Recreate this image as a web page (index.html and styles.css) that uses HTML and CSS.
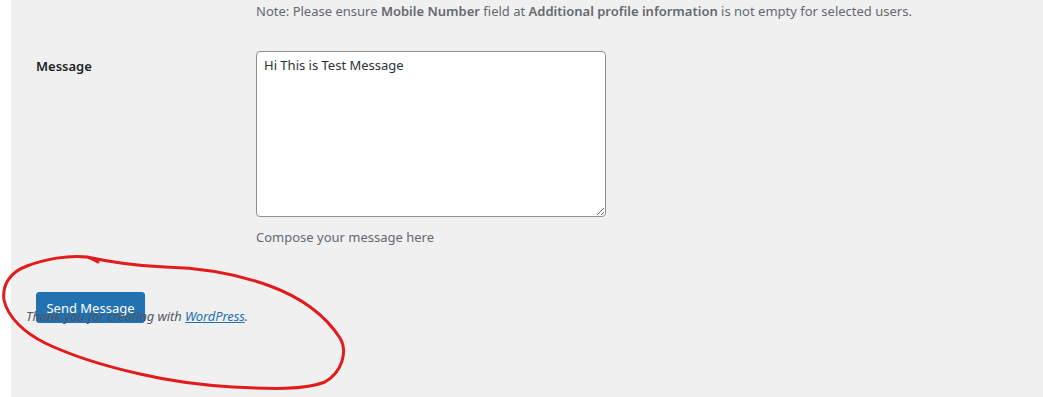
FILE: index.html
```html
<!DOCTYPE html>
<html lang="en">
<head>
    <meta charset="UTF-8">
    <meta name="viewport" content="width=device-width, initial-scale=1.0">
    <title>Send Message</title>
    <link rel="stylesheet" href="styles.css">
</head>
<body>
    <div class="wpcontent">
        <div class="formrow">
            <div class="label"></div>
            <p class="description note">Note: Please ensure <strong>Mobile Number</strong> field at <strong>Additional profile information</strong> is not empty for selected users.</p>
        </div>
        <div class="formrow msgrow">
            <label class="label" for="message">Message</label>
            <div class="field">
                <textarea id="message" class="msgbox">Hi This is Test Message</textarea>
                <p class="description">Compose your message here</p>
            </div>
        </div>
        <div class="submitrow">
            <button type="submit" class="button-primary">Send Message</button>
        </div>

        <div class="wpfooter">
            <span class="thanks">Thank you for creating with <a href="#">WordPress</a>.</span>
        </div>
    </div>

    <svg class="scribble" width="360" height="150" viewBox="0 250 360 150">
        <path d="M87 257 C110 262 135 266 165 267 C205 268 240 275 270 286 C300 297 325 315 340 338 C348 352 342 372 325 382 C305 390 270 389 233 387 C200 385 170 381 140 374 C100 365 70 355 45 343 C25 333 8 318 4 300 C2 285 10 272 27 266 C45 259 68 255 87 257 C92 258 95 260 98 262"
              fill="none" stroke="#e21b1b" stroke-width="3" stroke-linecap="round"/>
    </svg>
</body>
</html>
```

FILE: styles.css
```css
*{
    box-sizing: border-box;
}
body{
    position: relative;
    margin: 0;
    background: #fff;
    font-family: "Noto Sans", "Open Sans", sans-serif;
    font-size: 13px;
    color: #3c434a;
    overflow: hidden;
}
.wpcontent{
    position: relative;
    margin-left: 11px;
    height: 397px;
    background: #f0f0f1;
    padding-left: 25px;
}
.formrow{
    display: flex;
}
.label{
    width: 220px;
    flex-shrink: 0;
    font-weight: 600;
    color: #1d2327;
    font-size: 13px;
}
.description{
    margin: 0;
    color: #646970;
    font-size: 13px;
}
.note{
    padding-top: 2px;
}
.note strong{
    font-weight: 600;
}
.msgrow{
    margin-top: 31px;
}
.msgrow .label{
    padding-top: 6px;
}
.field{
    display: flex;
    flex-direction: column;
}
.msgbox{
    width: 350px;
    height: 166px;
    border: 1px solid #8c8f94;
    border-radius: 4px;
    padding: 4px 7px;
    font-family: inherit;
    font-size: 13px;
    color: #2c3338;
    background: #fff;
    resize: both;
}
.field .description{
    margin-top: 11px;
}
.submitrow{
    margin-top: 46px;
}
.button-primary{
    background: #2271b1;
    border: 1px solid #2271b1;
    border-radius: 3px;
    color: #fff;
    font-family: inherit;
    font-size: 13px;
    width: 109px;
    height: 31px;
    padding: 0;
}
.wpfooter{
    position: absolute;
    left: 15px;
    top: 307px;
    font-style: italic;
    color: #50575e;
    font-size: 13px;
    letter-spacing: -0.1px;
}
.wpfooter a{
    color: #2271b1;
}
.scribble{
    position: absolute;
    left: 0;
    top: 250px;
}
```
